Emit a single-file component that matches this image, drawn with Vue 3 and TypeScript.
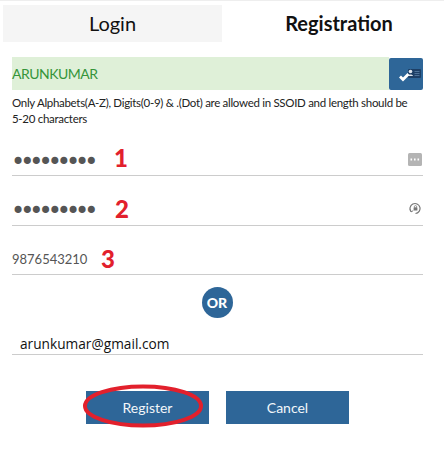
<script setup lang="ts">
const hint =
  "Only Alphabets(A-Z), Digits(0-9) & .(Dot) are allowed in SSOID and length should be 5-20 characters";
const dots = "•••••••••";
</script>

<template>
  <div class="page">
    <div class="tabs">
      <div class="tab tab-off">Login</div>
      <div class="tab tab-on">Registration</div>
    </div>

    <div class="form">
      <div class="ssoid">
        <div class="ssoid-value">ARUNKUMAR</div>
        <div class="ssoid-btn">
          <svg width="34" height="32" viewBox="0 0 34 32">
            <rect x="19" y="11" width="13" height="9" rx="1" fill="#1d3f66" />
            <circle cx="21.5" cy="13.5" r="1.8" fill="#dfe6ee" />
            <path d="M19 18c.4-2 4.6-2 5 0z" fill="#dfe6ee" />
            <path d="M25.5 13.5h5M25.5 15.5h5M25.5 17.5h5" stroke="#4d7299" stroke-width="1" />
            <path d="M11 18.5l3 3 5.5-5.5" fill="none" stroke="#fff" stroke-width="2.8" />
          </svg>
        </div>
      </div>
      <p class="hint">{{ hint }}</p>

      <div class="field field-pass">
        <span class="dots">{{ dots }}</span>
        <span class="mark mark-1">1</span>
        <svg class="field-icon" width="14" height="13" viewBox="0 0 14 13">
          <rect width="14" height="13" rx="1.5" fill="#b4b4b4" />
          <path d="M2.5 6.5h1.6M6 6.5h1.6M9.5 6.5h1.6" stroke="#fff" stroke-width="1.8" />
        </svg>
      </div>

      <div class="field field-pass2">
        <span class="dots">{{ dots }}</span>
        <span class="mark mark-2">2</span>
        <svg class="field-icon" width="13" height="13" viewBox="0 0 13 13">
          <path d="M2 9.5A5 5 0 1 1 6.5 11.5" fill="none" stroke="#777" stroke-width="1.2" />
          <path d="M1 7.5l1 2.4 2.2-1.2" fill="none" stroke="#777" stroke-width="1" />
          <rect x="4.6" y="5.5" width="3.8" height="3" fill="#777" />
          <circle cx="6.5" cy="4.8" r="1.2" fill="none" stroke="#777" stroke-width=".8" />
        </svg>
      </div>

      <div class="field field-mobile">
        <span class="mobile">9876543210</span>
        <span class="mark mark-3">3</span>
      </div>

      <div class="or-row"><span class="or">OR</span></div>

      <div class="email">arunkumar@gmail.com</div>

      <div class="actions">
        <button class="btn" type="button">
          Register
          <svg class="ring" width="124" height="46" viewBox="0 0 124 46">
            <ellipse cx="61" cy="22" rx="58" ry="19.5" fill="none" stroke="#e2202c" stroke-width="4" />
          </svg>
        </button>
        <button class="btn" type="button">Cancel</button>
      </div>
    </div>
  </div>
</template>

<style scoped>
.page {
  width: 444px;
  height: 452px;
  box-sizing: border-box;
  padding-top: 1px;
  background: #fff;
  border-top: 1px solid #eeeeee;
  font-family: Lato, "Noto Sans", sans-serif;
  overflow: hidden;
}
.tabs {
  display: flex;
  margin: 3px 0 0 3px;
  height: 37px;
}
.tab {
  flex: none;
  width: 219px;
  font-size: 20px;
  line-height: 36px;
  text-align: center;
  color: #111;
}
.tab-off {
  background: #f5f5f5;
}
.tab-on {
  width: 234px;
  font-weight: 700;
}
.form {
  width: 411px;
  margin: 15px 0 0 12px;
}
.ssoid {
  display: flex;
  height: 33px;
}
.ssoid-value {
  flex: 1;
  background: #dff0d8;
  color: #35953a;
  font-size: 14px;
  letter-spacing: -0.5px;
  line-height: 34px;
}
.ssoid-btn {
  width: 34px;
  margin-top: 1px;
  background: #2e6698;
  border-radius: 2px;
  display: flex;
  align-items: center;
  justify-content: center;
}
.hint {
  margin: 5px 0 0;
  max-width: 400px;
  font-size: 11.5px;
  letter-spacing: -0.3px;
  line-height: 16px;
  color: #222;
}
.field {
  position: relative;
  display: flex;
  align-items: center;
  border-bottom: 1px solid #cccccc;
  color: #555;
}
.field-pass {
  height: 47px;
  margin-top: 1px;
}
.field-pass2 {
  height: 49px;
}
.field-mobile {
  height: 48px;
}
.dots {
  font-family: "DejaVu Sans", sans-serif;
  font-size: 24px;
  line-height: 24px;
  letter-spacing: -5px;
  color: #555;
  width: 103px;
  margin: 21px 0 0 -1px;
}
.mobile {
  width: 89px;
  font-size: 13px;
  margin-top: 17px;
  color: #555;
}
.mark {
  color: #e2202c;
  font-size: 24px;
  font-weight: 900;
  margin-top: 11px;
}
.mark-2 {
  margin-top: 16px;
  margin-left: 1px;
}
.mark-3 {
  margin-top: 16px;
}
.field-icon {
  margin-left: auto;
  margin-right: 1px;
  margin-top: 16px;
}
.or-row {
  display: flex;
  justify-content: center;
  margin-top: 12px;
  padding-right: 1px;
}
.or {
  width: 31px;
  height: 31px;
  border-radius: 50%;
  background: #2e6698;
  color: #fff;
  font-size: 14px;
  font-weight: 900;
  line-height: 31px;
  text-align: center;
}
.email {
  margin-top: 15px;
  padding-left: 8px;
  height: 21px;
  font-family: "Open Sans", sans-serif;
  font-size: 13.7px;
  line-height: 22px;
  color: #111;
  border-bottom: 1px solid #cccccc;
}
.actions {
  display: flex;
  gap: 17px;
  margin: 36px 0 0 74px;
}
.btn {
  position: relative;
  width: 123px;
  height: 33px;
  padding: 0;
  border: 0;
  background: #2e6698;
  color: #f2f6fa;
  font-family: Lato, "Noto Sans", sans-serif;
  font-size: 14px;
}
.ring {
  position: absolute;
  left: -4px;
  top: -7px;
}
</style>
